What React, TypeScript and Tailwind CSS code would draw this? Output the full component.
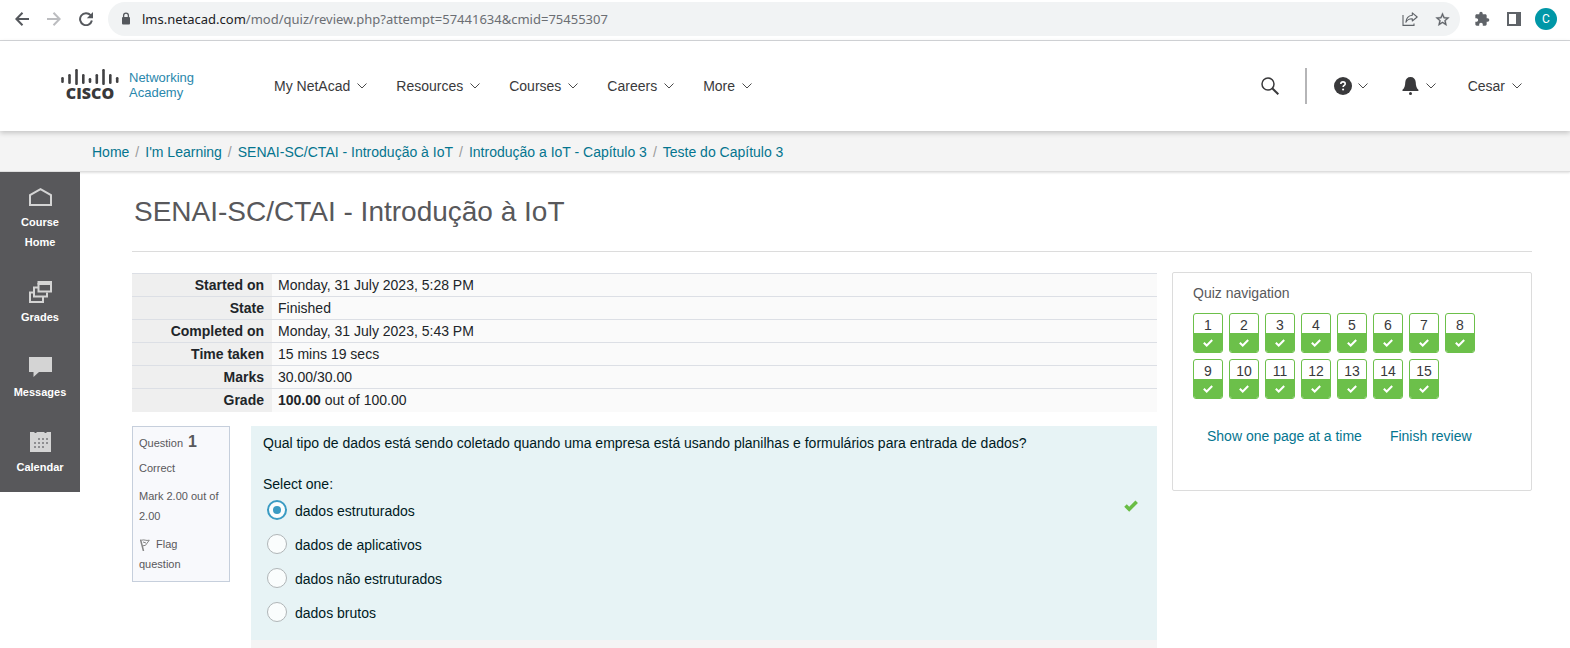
import React from "react";

const attempt = [
  { label: "Started on", value: "Monday, 31 July 2023, 5:28 PM" },
  { label: "State", value: "Finished" },
  { label: "Completed on", value: "Monday, 31 July 2023, 5:43 PM" },
  { label: "Time taken", value: "15 mins 19 secs" },
  { label: "Marks", value: "30.00/30.00" },
  {
    label: "Grade",
    value: (
      <>
        <b>100.00</b> out of 100.00
      </>
    ),
  },
];

const crumbs = [
  "Home",
  "I'm Learning",
  "SENAI-SC/CTAI - Introdução à IoT",
  "Introdução a IoT - Capítulo 3",
  "Teste do Capítulo 3",
];

const answers = [
  "dados estruturados",
  "dados de aplicativos",
  "dados não estruturados",
  "dados brutos",
];

const questionNumbers = Array.from({ length: 15 }, (_, i) => i + 1);

function Chevron() {
  return (
    <svg width="10" height="6" viewBox="0 0 10 6" fill="none" stroke="#4a4a4a" strokeWidth="1">
      <path d="M0.5 0.5 L5 5 L9.5 0.5" />
    </svg>
  );
}

function ToolButton({ label, children }: { label: string; children: React.ReactNode }) {
  return (
    <button type="button" aria-label={label} className="flex h-8 w-8 items-center justify-center">
      {children}
    </button>
  );
}

function BrowserBar() {
  return (
    <div className="flex h-[41px] items-start gap-1.5 border-b border-[#d5d7da] bg-white pt-0.5 pr-2 pl-1.5">
      <div className="flex h-[34px] items-center">
        <ToolButton label="Back">
          <svg width="14" height="14" viewBox="0 0 14 14" fill="none" stroke="#55585d" strokeWidth="2">
            <path d="M14 7H1.5M7.5 0.8L1.4 7l6.1 6.2" />
          </svg>
        </ToolButton>
        <ToolButton label="Forward">
          <svg width="14" height="14" viewBox="0 0 14 14" fill="none" stroke="#bcbdc0" strokeWidth="2">
            <path d="M0 7h12.5M6.5 0.8L12.6 7l-6.1 6.2" />
          </svg>
        </ToolButton>
        <ToolButton label="Reload">
          <svg width="14" height="14" viewBox="0 0 14 14">
            <path d="M11.6 3.2A6 6 0 1 0 12.9 8.6" fill="none" stroke="#55585d" strokeWidth="2" />
            <path d="M14 0v6.2H7.8z" fill="#55585d" />
          </svg>
        </ToolButton>
      </div>
      <div className="flex h-[34px] flex-1 items-center rounded-full bg-[#f1f3f4] pr-0.5 pl-2.5">
        <svg width="16" height="14" viewBox="0 0 16 14" className="mr-2">
          <rect x="4" y="5" width="8" height="7.5" rx="1" fill="#55585d" />
          <path d="M5.6 5.5V3.6a2.4 2.4 0 0 1 4.8 0v1.9" fill="none" stroke="#55585d" strokeWidth="1.3" />
        </svg>
        <div className="flex-1 font-['Noto_Sans',sans-serif] text-[13px] whitespace-nowrap text-[#6b6e73]">
          <span className="text-[#202124]">lms.netacad.com</span>
          /mod/quiz/review.php?attempt=57441634&amp;cmid=75455307
        </div>
        <ToolButton label="Share">
          <svg width="16" height="14" viewBox="0 0 16 14" fill="none" stroke="#5f6368" strokeWidth="1.1">
            <path d="M1 3v10.4h11V11.5" />
            <path d="M10.3 0.9L15.2 5l-4.9 4V6.7C7.4 6.6 5.2 7.6 3.9 10.2c0.3-3.5 2.5-6.5 6.4-6.9z" strokeLinejoin="round" />
          </svg>
        </ToolButton>
        <ToolButton label="Bookmark">
          <svg width="15" height="15" viewBox="1 1 22 22" fill="#5f6368">
            <path
              d="M22 9.24l-7.19-.62L12 2 9.19 8.63 2 9.24l5.46 4.73L5.82 21 12 17.27 18.18 21l-1.63-7.03L22 9.24zM12 15.4l-3.76 2.27 1-4.28-3.32-2.88 4.38-.38L12 6.1l1.71 4.04 4.38.38-3.32 2.88 1 4.28L12 15.4z"
              stroke="#5f6368"
              strokeWidth="0.5"
            />
          </svg>
        </ToolButton>
      </div>
      <div className="flex h-[34px] items-center">
        <ToolButton label="Extensions">
          <svg width="16" height="16" viewBox="0 0 24 24" fill="#5f6368">
            <path d="M20.5 11H19V7c0-1.1-.9-2-2-2h-4V3.5a2.5 2.5 0 0 0-5 0V5H4c-1.1 0-1.990.9-1.990 2v3.8H3.5c1.490 0 2.7 1.210 2.7 2.7s-1.210 2.7-2.7 2.7H2V20c0 1.100.9 2 2 2h3.8v-1.5c0-1.490 1.210-2.7 2.7-2.7 1.490 0 2.7 1.210 2.7 2.7V22H17c1.100 0 2-.9 2-2v-4h1.500a2.500 2.500 0 0 0 0-5z" />
          </svg>
        </ToolButton>
        <ToolButton label="Side panel">
          <svg width="14" height="14" viewBox="0 0 14 14">
            <path d="M1 1h12v12H1z" fill="none" stroke="#5f6368" strokeWidth="2" />
            <path d="M9 0h5v14H9z" fill="#5f6368" />
          </svg>
        </ToolButton>
        <ToolButton label="Profile">
          <span className="flex h-[22px] w-[22px] items-center justify-center rounded-full bg-[#0097a7] font-[Roboto,sans-serif] text-xs text-white">
            C
          </span>
        </ToolButton>
      </div>
    </div>
  );
}

function CiscoLogo() {
  const bars = [
    [1.5, 8, 13],
    [8.5, 5, 14],
    [15.5, 0, 15],
    [22.3, 5, 14],
    [29, 9, 13],
    [35.8, 5, 14],
    [42.5, 0, 15],
    [49.3, 5, 14],
    [56.2, 8, 13],
  ];
  return (
    <a href="#" className="flex items-center gap-2.5 pb-0.5">
      <span className="flex w-[58px] flex-col items-center">
        <svg width="58" height="16" viewBox="0 0 58 16" stroke="#414143" strokeWidth="2.6" strokeLinecap="round">
          {bars.map(([x, top, bottom]) => (
            <line key={x} x1={x} x2={x} y1={top + 1.2} y2={bottom - 0.2} />
          ))}
        </svg>
        <span className="font-['Open_Sans',sans-serif] text-base leading-4 font-extrabold text-[#39393b]">CISCO</span>
      </span>
      <span className="text-[13px] leading-[15px] text-[#2a87ac]">
        Networking
        <br />
        Academy
      </span>
    </a>
  );
}

function Header() {
  return (
    <header className="relative flex h-[90px] items-center bg-white pr-12 pl-[61px] shadow-[0_2px_5px_rgba(0,0,0,0.2)]">
      <CiscoLogo />
      <nav className="ml-20 flex flex-1 items-center gap-[29px] text-[#39393b]">
        {["My NetAcad", "Resources", "Courses", "Careers", "More"].map((item) => (
          <button key={item} type="button" className="flex items-center gap-[7px] whitespace-nowrap">
            {item}
            <Chevron />
          </button>
        ))}
      </nav>
      <div className="flex items-center text-[#39393b]">
        <button type="button" aria-label="Search">
          <svg width="18" height="18" viewBox="0 0 18 18" fill="none" stroke="#39393b">
            <circle cx="7" cy="7" r="6" strokeWidth="1.5" />
            <path d="M11.2 11.2L17.3 17.3" strokeWidth="2" />
          </svg>
        </button>
        <div className="mr-[27px] ml-[26px] h-9 w-0.5 bg-[#b5b5b7]" />
        <button type="button" aria-label="Help" className="flex items-center gap-1.5">
          <svg width="18" height="18" viewBox="0 0 18 18">
            <circle cx="9" cy="9" r="9" fill="#39393b" />
            <path d="M6.8 7.1c0-1.500 1-2.200 2.200-2.200s2.200.7 2.200 2c0 1.500-2.100 1.500-2.100 3.200" fill="none" stroke="#fff" strokeWidth="1.6" />
            <circle cx="9.1" cy="12.5" r="1.05" fill="#fff" />
          </svg>
          <Chevron />
        </button>
        <button type="button" aria-label="Notifications" className="ml-[34px] flex items-center gap-[7px]">
          <svg width="17" height="18" viewBox="0 0 17 18" fill="#39393b">
            <path d="M8.5 0C11.5 0 13.5 2 13.7 5c.2 4 .8 6 2.700 7.800V14H0.500V12.800C2.500 11 3.100 9 3.300 5 3.500 2 5.500 0 8.500 0z" />
            <circle cx="8.5" cy="16.5" r="1.5" />
          </svg>
          <Chevron />
        </button>
        <button type="button" className="ml-8 flex items-center gap-[7px]">
          Cesar
          <Chevron />
        </button>
      </div>
    </header>
  );
}

function Breadcrumb() {
  return (
    <nav
      aria-label="Breadcrumb"
      className="flex h-[41px] items-center border-b border-[#dedede] bg-[#f4f4f4] pt-0.5 pl-[92px] shadow-[0_1px_2px_rgba(0,0,0,0.12)]"
    >
      <ol className="flex">
        {crumbs.map((crumb, i) => (
          <li key={crumb} className="whitespace-nowrap">
            {i > 0 && <span className="px-1.5 text-[#9a9a9a]">/</span>}
            <a href="#" className="text-[#04758f]">
              {crumb}
            </a>
          </li>
        ))}
      </ol>
    </nav>
  );
}

function SideItem({ label, children }: { label: string; children: React.ReactNode }) {
  return (
    <a href="#" className="flex flex-col items-center px-4 py-[15px] text-center text-[11px] leading-5 font-bold text-white">
      <span className="mb-[5px] flex h-5 items-center">{children}</span>
      {label}
    </a>
  );
}

function Sidebar() {
  return (
    <nav aria-label="Course" className="relative w-20 shrink-0 bg-[#58585b]">
      <SideItem label="Course Home">
        <svg width="23" height="18" viewBox="0 0 23 18" fill="none" stroke="#d4d4d4" strokeWidth="2">
          <path d="M1 17V7L11.5 1.2 22 7V17z" />
        </svg>
      </SideItem>
      <SideItem label="Grades">
        <svg width="23" height="22" viewBox="0 0 23 22" fill="none" stroke="#d4d4d4" strokeWidth="2">
          <path d="M9.5 3v7.500H22V3z" />
          <path d="M8.5 0H23v3.500H8.500z" fill="#d4d4d4" stroke="none" />
          <path d="M9 6.5H5V15.500h13v-4M5 11.500H1V21h13v-5" />
        </svg>
      </SideItem>
      <SideItem label="Messages">
        <svg width="23" height="20" viewBox="0 0 23 20" fill="#d4d4d4">
          <path d="M0 0h23v15H10l-5.5 5v-5H0z" />
        </svg>
      </SideItem>
      <SideItem label="Calendar">
        <svg width="21" height="20" viewBox="0 0 21 20">
          <path d="M0 0h21v20H0z" fill="#d4d4d4" />
          <path d="M4.5 0.5h2M14.5 0.5h2" stroke="#58585b" />
          <path d="M8 7h10M4 11h14M4 15h10" stroke="#77777a" strokeWidth="1.5" strokeDasharray="2 2" />
        </svg>
      </SideItem>
    </nav>
  );
}

function AttemptSummary() {
  return (
    <table className="mt-px w-full border-collapse text-[#212529]">
      <tbody>
        {attempt.map((row) => (
          <tr key={row.label} className="h-[23px] border-t border-[#dcdfe5]">
            <th scope="row" className="w-[140px] bg-[#efefef] p-0 pr-2 text-right leading-[22px] font-bold">
              {row.label}
            </th>
            <td className="bg-[#fafafa] p-0 pl-1.5 leading-[22px]">{row.value}</td>
          </tr>
        ))}
      </tbody>
    </table>
  );
}

function Question() {
  return (
    <div className="mt-3.5 flex items-start gap-[21px]">
      <div className="flex w-[98px] shrink-0 flex-col gap-2 border border-[#c6cfdc] bg-[#f8f9fc] px-1.5 pt-[5px] pb-[7px] text-[11px] leading-5 text-[#58585b]">
        <h2 className="-mb-1 h-[22px]">
          Question <span className="ml-0.5 text-base leading-5 font-bold">1</span>
        </h2>
        <div>Correct</div>
        <div>Mark 2.00 out of 2.00</div>
        <button type="button" className="text-left">
          <svg width="10" height="12" viewBox="0 0 10 12" className="mr-1.5 ml-px inline" fill="none" stroke="#858585">
            <path d="M0.5 0.5L3.5 12" strokeWidth="1.5" />
            <path d="M1.5 1.3C4 0 6 2.2 9.3 1.2L5.5 6.3 3 6.8" />
            <path d="M3 3l3 1" />
          </svg>
          Flag
          <br />
          question
        </button>
      </div>
      <div className="min-w-0 flex-1 bg-[#f4f4f4] pb-2">
        <div className="bg-[#e7f3f5] px-3 pt-[7px] pb-1 text-[#001a1e]">
          <p className="leading-5">
            Qual tipo de dados está sendo coletado quando uma empresa está usando planilhas e formulários para entrada
            de dados?
          </p>
          <fieldset className="mt-[21px] flex items-start justify-between">
            <div>
              <legend className="mb-1.5 leading-5">Select one:</legend>
              <div className="flex flex-col">
                {answers.map((answer, i) => (
                  <label key={answer} className="flex h-[34px] items-start gap-2 pl-1 leading-[22px]">
                    <input
                      type="radio"
                      name="answer"
                      defaultChecked={i === 0}
                      className="flex h-5 w-5 appearance-none items-center justify-center rounded-full border border-[#b0b5b7] bg-[#fafdfd] checked:border-2 checked:border-[#3a9bc3] checked:before:h-2 checked:before:w-2 checked:before:rounded-full checked:before:bg-[#3a9bc3]"
                    />
                    {answer}
                  </label>
                ))}
              </div>
            </div>
            <svg width="14" height="12" viewBox="0 0 14 12" className="mt-[26px] mr-[7px]" role="img" aria-label="Correct">
              <path d="M1.5 5.5L5.2 9.2 12.7 1.8" fill="none" stroke="#69bd45" strokeWidth="3.6" />
            </svg>
          </fieldset>
        </div>
      </div>
    </div>
  );
}

function QuizNavigation() {
  return (
    <aside className="w-[360px] shrink-0 rounded-xs border border-[#dcdcdc] px-5 pt-2.5 pb-11">
      <h2 className="leading-5 text-[#58585b]">Quiz navigation</h2>
      <div className="mt-2.5 grid grid-cols-[repeat(8,30px)] gap-1.5">
        {questionNumbers.map((n) => (
          <a
            key={n}
            href="#"
            className="flex h-10 flex-col overflow-hidden rounded-[3px] border border-[#6cc04a] bg-white text-center text-[#39393b]"
          >
            <span className="h-[19px] leading-[23px]">{n}</span>
            <span className="flex flex-1 items-center justify-center bg-[#6cc04a]">
              <svg width="10" height="8" viewBox="0 0 10 8" fill="none" stroke="#fff" strokeWidth="2">
                <path d="M0.8 3.8L3.7 6.5 9.2 1" />
              </svg>
            </span>
          </a>
        ))}
      </div>
      <div className="mt-[27px] flex gap-7 pl-3.5 leading-5 whitespace-nowrap text-[#04758f]">
        <a href="#">Show one page at a time</a>
        <a href="#">Finish review</a>
      </div>
    </aside>
  );
}

export default function App() {
  return (
    <div className="bg-white font-['Liberation_Sans',Arial,sans-serif] text-sm">
      <BrowserBar />
      <Header />
      <Breadcrumb />
      <div className="flex items-start">
        <Sidebar />
        <main className="min-w-0 flex-1 pr-[38px] pl-[52px]">
          <h1 className="border-b border-[#dcdcdc] pt-[22px] pb-[21px] pl-0.5 text-[28px] leading-9 text-[#58585b]">
            SENAI-SC/CTAI - Introdução à IoT
          </h1>
          <div className="mt-5 flex items-start gap-[15px]">
            <section className="min-w-0 flex-1">
              <AttemptSummary />
              <Question />
            </section>
            <QuizNavigation />
          </div>
        </main>
      </div>
    </div>
  );
}
